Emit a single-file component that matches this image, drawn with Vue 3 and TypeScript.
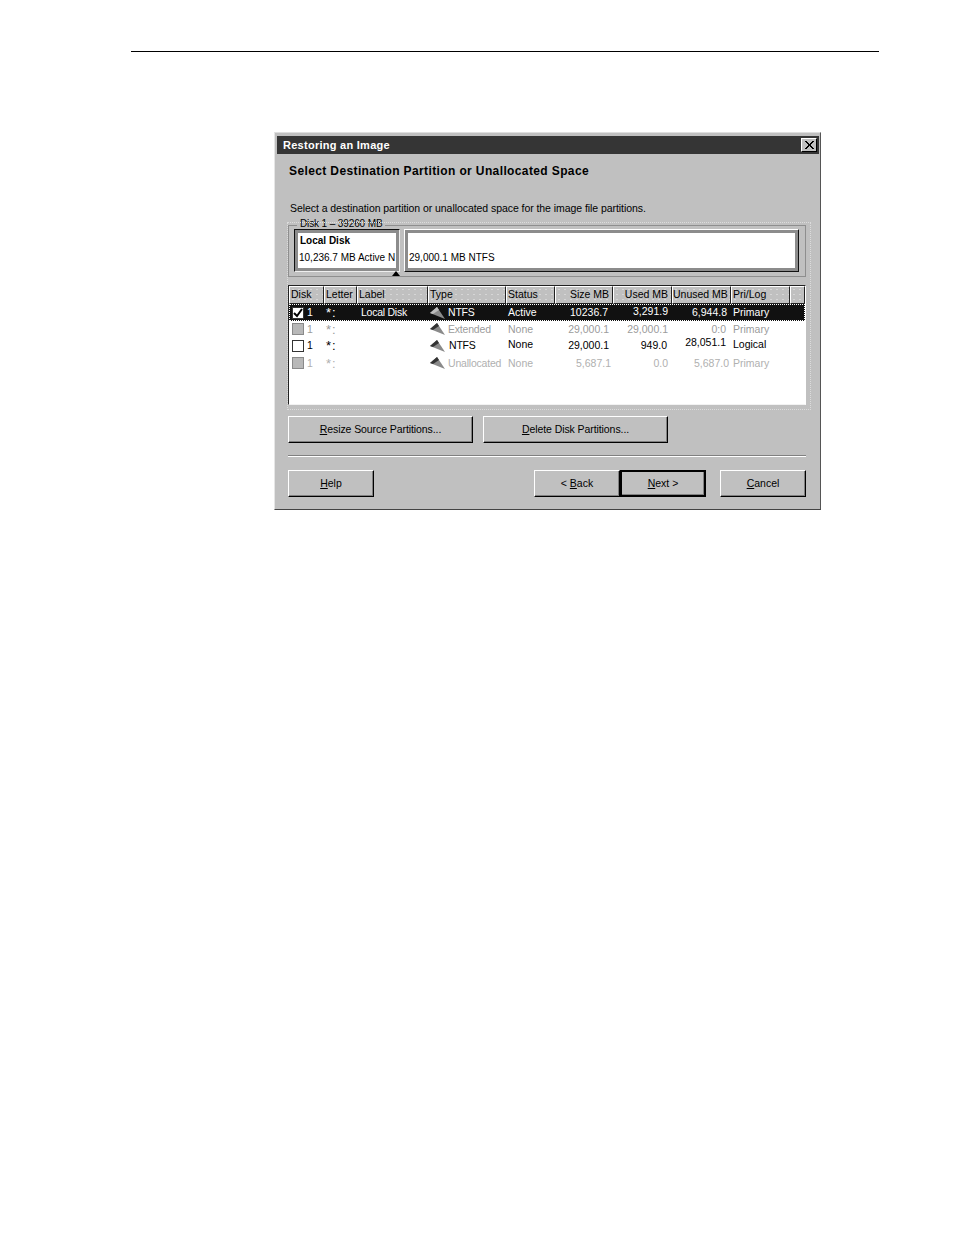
<script setup lang="ts">
interface Cell { text: string; cls?: string }
interface Row { kind: string; check: string; cells: Cell[] }

const headers = [
  { text: 'Disk' }, { text: 'Letter' }, { text: 'Label' }, { text: 'Type' }, { text: 'Status' },
  { text: 'Size MB', right: true }, { text: 'Used MB', right: true }, { text: 'Unused MB', right: true },
  { text: 'Pri/Log' }, { text: '' },
]

const rows: Row[] = [
  {
    kind: 'selected', check: 'checked',
    cells: [
      { text: '1' }, { text: '*:', cls: 'star' }, { text: 'Local Disk', cls: 'label' }, { text: 'NTFS', cls: 'tight' }, { text: 'Active' },
      { text: '10236.7', cls: 'num more' }, { text: '3,291.9', cls: 'num up' }, { text: '6,944.8', cls: 'num' }, { text: 'Primary' },
    ],
  },
  {
    kind: 'disabled', check: 'grey',
    cells: [
      { text: '1' }, { text: '*:', cls: 'star' }, { text: '' }, { text: 'Extended', cls: 'tight' }, { text: 'None' },
      { text: '29,000.1', cls: 'num' }, { text: '29,000.1', cls: 'num' }, { text: '0:0', cls: 'num more' }, { text: 'Primary' },
    ],
  },
  {
    kind: 'normal', check: 'empty',
    cells: [
      { text: '1' }, { text: '*:', cls: 'star' }, { text: '' }, { text: 'NTFS', cls: 'tight nudge' }, { text: 'None', cls: 'up' },
      { text: '29,000.1', cls: 'num' }, { text: '949.0', cls: 'num more' }, { text: '28,051.1', cls: 'num more up2' }, { text: 'Logical', cls: 'up' },
    ],
  },
  {
    kind: 'faint', check: 'grey',
    cells: [
      { text: '1' }, { text: '*:', cls: 'star' }, { text: '' }, { text: 'Unallocated', cls: 'tight' }, { text: 'None' },
      { text: '5,687.1', cls: 'num less' }, { text: '0.0', cls: 'num' }, { text: '5,687.0', cls: 'num less' }, { text: 'Primary' },
    ],
  },
]
</script>

<template>
  <main class="page">
    <hr class="rule" />
    <section class="dialog">
      <header class="titlebar">
        <span>Restoring an Image</span>
        <span class="close">
          <svg width="12" height="10" viewBox="0 0 12 10"><path d="M2 1l8 8M3 1l8 8M10 1L2 9M11 1L3 9" stroke="#000" fill="none" /></svg>
        </span>
      </header>
      <div class="body">
        <h1 class="heading">Select Destination Partition or Unallocated Space</h1>
        <p class="intro">Select a destination partition or unallocated space for the image file partitions.</p>

        <div class="panel">
          <fieldset class="group">
            <legend class="legend">Disk 1 – 39260 MB</legend>
            <div class="block current">
              <div class="block-inner">
                <strong>Local Disk</strong>
                <span>10,236.7 MB Active N</span>
              </div>
              <i class="pointer"></i>
            </div>
            <div class="block other">
              <div class="block-inner">
                <strong></strong>
                <span>29,000.1 MB NTFS</span>
              </div>
            </div>
          </fieldset>

          <div class="list">
            <div class="head">
              <div v-for="(h, i) in headers" :key="i" class="head-cell" :class="{ right: h.right }">{{ h.text }}</div>
            </div>
            <div v-for="(r, ri) in rows" :key="ri" class="row" :class="r.kind">
              <div v-for="(c, ci) in r.cells" :key="ci" class="cell" :class="c.cls">
                <span v-if="ci === 0" class="check" :class="r.check">
                  <svg v-if="r.check === 'checked'" width="10" height="10" viewBox="0 0 10 10"><path d="M1 5l3 3 5-7" fill="none" stroke="#000" stroke-width="2" /></svg>
                </span>
                <svg v-if="ci === 3" class="wedge" width="16" height="14" viewBox="0 0 16 14">
                  <polygon points="0,7 7,1 15,13" fill="#8a8a8a" />
                  <polygon points="0,7 7,1 9,4 3,8" :fill="r.kind === 'selected' ? '#bdbdbd' : '#333'" />
                </svg>
                <span class="txt">{{ c.text }}</span>
              </div>
            </div>
          </div>
        </div>

        <div class="actions">
          <button class="btn wide"><u>R</u>esize Source Partitions...</button>
          <button class="btn wide"><u>D</u>elete Disk Partitions...</button>
        </div>

        <div class="sep"></div>

        <div class="footer">
          <button class="btn"><u>H</u>elp</button>
          <div class="nav">
            <button class="btn">&lt; <u>B</u>ack</button>
            <button class="btn default"><u>N</u>ext &gt;</button>
          </div>
          <button class="btn"><u>C</u>ancel</button>
        </div>
      </div>
    </section>
  </main>
</template>

<style>
html, body { background: #fff; }
</style>

<style scoped>
.page {
  height: 1235px;
  box-sizing: border-box;
  padding: 51px 75px 0 131px;
  background: #fff;
  font-family: "Liberation Sans", Arial, sans-serif;
  color: #000;
}
.rule {
  margin: 0;
  border: 0;
  height: 1px;
  background: #000;
}
.dialog {
  box-sizing: border-box;
  width: 547px;
  height: 378px;
  margin: 80px 0 0 143px;
  padding: 3px 1px 0 2px;
  background: #c0c0c0;
  border: 1px solid;
  border-color: #dedede #555 #444 #e6e6e6;
}
.titlebar {
  height: 18px;
  padding: 0 2px 0 6px;
  display: flex;
  align-items: center;
  justify-content: space-between;
  background: #353535;
  color: #fff;
  font-size: 11px;
  font-weight: 700;
  letter-spacing: 0.27px;
}
.close {
  width: 16px;
  height: 14px;
  box-sizing: border-box;
  display: flex;
  align-items: center;
  justify-content: center;
  background: #c0c0c0;
  border: 1px solid;
  border-color: #fff #000 #000 #fff;
}
.body {
  padding: 0 13px 0 11px;
}
.heading {
  margin: 9px 0 0 1px;
  font-size: 12px;
  line-height: 16px;
  font-weight: 700;
  letter-spacing: 0.38px;
}
.intro {
  margin: 22px 0 0 2px;
  font-size: 10.5px;
  line-height: 14px;
  letter-spacing: -0.06px;
}
.panel {
  position: relative;
  margin-top: 10px;
}
.panel::after {
  content: "";
  position: absolute;
  inset: -3px -5px -5px -1px;
  border: 1px dotted #dcdcdc;
  pointer-events: none;
}
.group {
  position: relative;
  box-sizing: border-box;
  height: 52px;
  margin: 0;
  padding: 3px 0 0 5px;
  display: flex;
  gap: 4px;
  min-width: 0;
  border: 1px solid #8e8e8e;
}
.legend {
  position: absolute;
  top: -8px;
  left: 8px;
  padding: 0 3px;
  background: #c0c0c0;
  font-size: 10px;
  line-height: 12px;
  letter-spacing: -0.12px;
}
.block {
  position: relative;
  box-sizing: border-box;
  height: 43px;
  border: 1px solid;
}
.block.current {
  width: 106px;
  border-color: #111 #eee #eee #111;
}
.block.other {
  width: 395px;
  border-color: #fff #111 #111 #fff;
}
.block-inner {
  box-sizing: border-box;
  height: 100%;
  border: 3px solid #8c8c8c;
  background: #fff;
  padding: 1px 0 0 1px;
  overflow: hidden;
  white-space: nowrap;
  font-size: 10px;
  line-height: 13px;
}
.block.other .block-inner {
  padding-left: 1px;
}
.block-inner strong,
.block-inner span {
  display: block;
  height: 13px;
}
.block-inner strong {
  margin-left: 1px;
  margin-bottom: 4px;
}
.pointer {
  position: absolute;
  right: -1px;
  bottom: -5px;
  width: 0;
  height: 0;
  border: 4px solid transparent;
  border-top: 0;
  border-bottom: 5px solid #000;
}
.list {
  box-sizing: border-box;
  height: 120px;
  margin-top: 8px;
  background: #fff;
  border: 1px solid;
  border-color: #222 #fff #f2f2f2 #222;
  display: grid;
  grid-template-rows: 18px 17px 16px 17px 18px;
  align-content: start;
  font-size: 10.5px;
}
.head,
.row {
  display: grid;
  grid-template-columns: 35px 33px 71px 78px 49px 58px 59px 59px 59px 1fr;
}
.head-cell {
  box-sizing: border-box;
  padding: 0 0 0 1px;
  line-height: 15px;
  white-space: nowrap;
  background-color: #c0c0c0;
  background-image: radial-gradient(#d6d6d6 0.6px, transparent 0.7px);
  background-size: 6px 5px;
  border: 1px solid;
  border-color: #fff #222 #222 #fff;
}
.head-cell.right {
  text-align: right;
  padding: 0 3px 0 0;
}
.row {
  align-items: center;
  white-space: nowrap;
}
.cell {
  display: flex;
  align-items: center;
  padding-left: 3px;
  line-height: 13px;
}
.cell:first-child {
  padding-left: 3px;
}
.cell:nth-child(4) {
  padding-left: 2px;
}
.cell:nth-child(5) {
  padding-left: 2px;
}
.cell:nth-child(9) {
  padding-left: 2px;
}
.cell.star {
  padding-left: 2px;
  font-size: 13px;
  letter-spacing: 1px;
}
.cell.label {
  padding-left: 4px;
  letter-spacing: -0.25px;
}
.cell.tight .txt {
  letter-spacing: -0.2px;
}
.cell.num {
  justify-content: flex-end;
  padding-right: 4px;
}
.cell.num.more {
  padding-right: 5px;
}
.cell.num.less {
  padding-right: 2px;
}
.cell.up {
  margin-top: -3px;
}
.cell.up2 {
  margin-top: -7px;
}
.cell.nudge .txt {
  margin-left: 1px;
}
.selected {
  background: #111;
  color: #fff;
  outline: 1px dotted #fff;
  outline-offset: -1px;
}
.disabled {
  color: #9c9c9c;
}
.faint {
  color: #b0b0b0;
}
.check {
  box-sizing: border-box;
  width: 12px;
  height: 12px;
  margin-right: 3px;
  display: flex;
  align-items: center;
  justify-content: center;
  border: 1px solid #333;
  background: #fff;
}
.check.grey {
  background: #b8b8b8;
  border-color: #8a8a8a;
}
.wedge {
  margin-right: 2px;
  flex: none;
}
.actions {
  margin-top: 11px;
  display: flex;
  gap: 10px;
}
.btn {
  box-sizing: border-box;
  width: 86px;
  height: 27px;
  padding: 0 0 2px;
  background: #c0c0c0;
  border: 1px solid;
  border-color: #fff #000 #000 #fff;
  box-shadow: inset -1px -1px 0 #808080;
  font-family: inherit;
  font-size: 10.5px;
  color: #000;
  white-space: nowrap;
}
.btn.wide {
  width: 185px;
  letter-spacing: -0.08px;
}
.btn.default {
  border: 2px solid #000;
}
.sep {
  height: 2px;
  margin-top: 12px;
  background: linear-gradient(#808080 50%, #fff 50%);
}
.footer {
  margin-top: 13px;
  display: flex;
  justify-content: space-between;
}
.nav {
  margin-left: auto;
  margin-right: 14px;
  display: flex;
}
</style>
